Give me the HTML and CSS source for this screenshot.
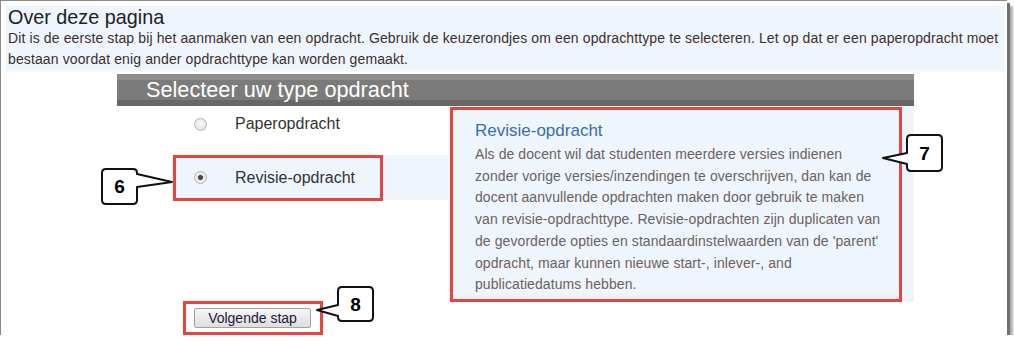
FILE: index.html
```html
<!DOCTYPE html>
<html>
<head>
    <title>Opdracht aanmaken</title>
    <link rel="stylesheet" href="styles.css">
</head>
<body>
    <div class="frame">
        <div class="about">
            <h1>Over deze pagina</h1>
            <p>Dit is de eerste stap bij het aanmaken van een opdracht. Gebruik de keuzerondjes om een opdrachttype te selecteren. Let op dat er een paperopdracht moet bestaan voordat enig ander opdrachttype kan worden gemaakt.</p>
        </div>

        <div class="wizard">
            <div class="wizard-head">Selecteer uw type opdracht</div>
            <div class="wizard-body">
                <div class="types">
                    <label class="type">
                        <input type="radio" name="type" value="paper">
                        <span>Paperopdracht</span>
                    </label>
                    <label class="type selected">
                        <input type="radio" name="type" value="revision" checked>
                        <span>Revisie-opdracht</span>
                    </label>
                </div>
                <div class="info">
                    <h3>Revisie-opdracht</h3>
                    <p>Als de docent wil dat studenten meerdere versies indienen zonder vorige versies/inzendingen te overschrijven, dan kan de docent aanvullende opdrachten maken door gebruik te maken van revisie-opdrachttype. Revisie-opdrachten zijn duplicaten van de gevorderde opties en standaardinstelwaarden van de 'parent' opdracht, maar kunnen nieuwe start-, inlever-, and publicatiedatums hebben.</p>
                </div>
            </div>
            <div class="wizard-foot">
                <button>Volgende stap</button>
            </div>
        </div>

        <!-- annotations -->
        <div class="mark mark-radio"></div>
        <div class="mark mark-info"></div>
        <div class="mark mark-button"></div>

        <svg class="callouts" width="1014" height="341" viewBox="0 0 1014 341">
            <path d="M106,169 H133 Q137,169 137,173 V174 L172,182 L137,187 V200 Q137,204 133,204 H106 Q102,204 102,200 V173 Q102,169 106,169 Z"/>
            <path d="M911,135 H938 Q942,135 942,139 V167 Q942,171 938,171 H911 Q907,171 907,167 V164 L883,158 L907,153 V139 Q907,135 911,135 Z"/>
            <path d="M342,287 H369 Q373,287 373,291 V317 Q373,321 369,321 H342 Q338,321 338,317 V316 L317,310 L338,305 V291 Q338,287 342,287 Z"/>
            <text x="119.5" y="193">6</text>
            <text x="924.5" y="160">7</text>
            <text x="355.5" y="311">8</text>
        </svg>
    </div>
</body>
</html>
```

FILE: styles.css
```css
body {
    margin: 0;
    font-family: "Liberation Sans", Arial, sans-serif;
    background: #fff;
}
.frame {
    position: relative;
    width: 1007px;
    height: 335px;
    box-sizing: border-box;
    border-left: 1px solid #8a8a8a;
    border-top: 1px solid #8a8a8a;
    box-shadow: 3px 3px 0 #707070, 6px 6px 2px #b0b0b0;
}
.about {
    margin: 5px 0 0 5px;
    width: 999px;
    height: 66px;
    box-sizing: border-box;
    padding: 0 0 0 2px;
    background-color: #eef5fc;
    border-bottom: 1px solid #f6f9fd;
}
.about h1 {
    margin: 0;
    font-size: 19.8px;
    font-weight: normal;
    line-height: 22px;
    color: #222;
}
.about p {
    margin: 0;
    font-size: 14px;
    letter-spacing: 0.12px;
    line-height: 20.5px;
    color: #3b2f2f;
}
.wizard {
    margin: 2px 0 0 116px;
    width: 797px;
}
.wizard-head {
    height: 32px;
    padding-left: 29px;
    font-size: 21.7px;
    line-height: 32px;
    color: #fff;
    background: linear-gradient(#8d8d8d 0, #8d8d8d 6px, #7b7b7b 6px, #7b7b7b 26px, #676767 26px);
}
.wizard-body {
    display: flex;
}
.types {
    width: 331px;
    padding-left: 56px;
    box-sizing: border-box;
}
.type {
    display: flex;
    align-items: center;
    height: 36px;
    font-size: 16px;
    color: #333;
}
.type + .type {
    margin-top: 13px;
    height: 45px;
}
.type.selected {
    background-color: #eef5fc;
}
.type input {
    appearance: none;
    -webkit-appearance: none;
    width: 13px;
    height: 13px;
    margin: 0 0 0 21px;
    border: 1px solid #b4b4b4;
    border-radius: 50%;
    background: radial-gradient(circle at 50% 40%, #fbfbfb, #dcdcdc);
    box-sizing: border-box;
}
.type input:checked {
    background: radial-gradient(circle, #4a4a4a 0, #4a4a4a 2.2px, #e4e4e4 2.8px, #f6f6f6);
}
.type span {
    margin-left: 28px;
}
.info {
    width: 466px;
    height: 196px;
    box-sizing: border-box;
    padding: 15px 0 0 27px;
    background-color: #eef5fc;
}
.info h3 {
    margin: 0 0 3px;
    font-size: 17px;
    font-weight: normal;
    line-height: 20px;
    color: #3a6ea7;
}
.info p {
    margin: 0;
    width: 412px;
    font-size: 14px;
    letter-spacing: 0.08px;
    line-height: 21.7px;
    color: #6a6260;
}
.wizard-foot {
    padding: 6px 0 0 77px;
}
button {
    width: 117px;
    height: 20px;
    padding: 0;
    font-family: "Liberation Sans", Arial, sans-serif;
    font-size: 14px;
    color: #1a1a3a;
    border: 1px solid #a2a2a2;
    border-radius: 2px;
    background: linear-gradient(#f6f6f6, #dedede);
}
.mark {
    position: absolute;
    box-sizing: border-box;
    border: 3px solid #e8443f;
}
.mark-radio {
    left: 172px;
    top: 154px;
    width: 210px;
    height: 46px;
}
.mark-info {
    left: 449px;
    top: 106px;
    width: 452px;
    height: 195px;
}
.mark-button {
    left: 182px;
    top: 300px;
    width: 140px;
    height: 34px;
}
.callouts {
    position: absolute;
    left: -1px;
    top: -1px;
}
.callouts path {
    fill: #fff;
    stroke: #111;
    stroke-width: 2;
    stroke-linejoin: round;
}
.callouts text {
    font-family: "Liberation Sans", Arial, sans-serif;
    font-size: 19px;
    font-weight: bold;
    text-anchor: middle;
    fill: #000;
}
```
